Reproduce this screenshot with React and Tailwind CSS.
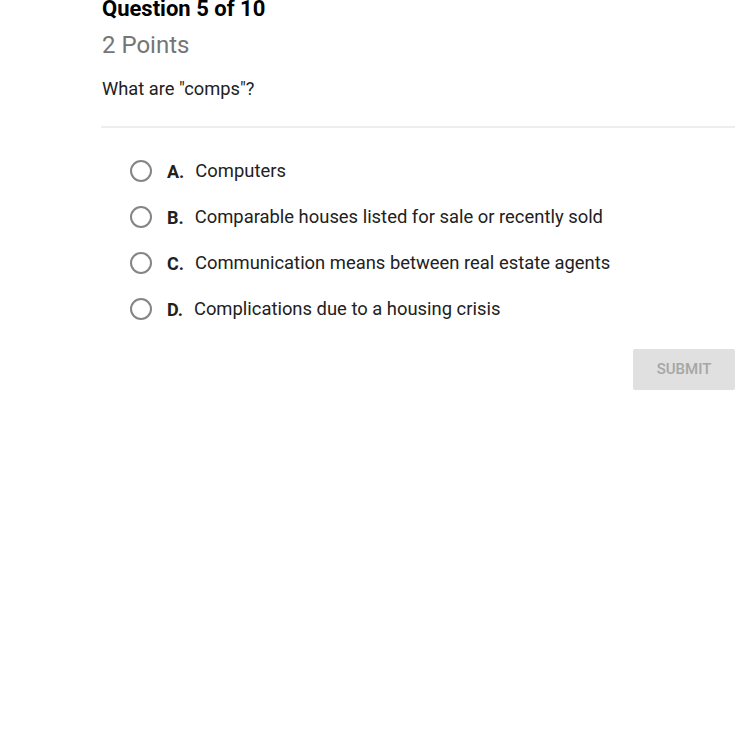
const options = [
  ['A.', 'Computers'],
  ['B.', 'Comparable houses listed for sale or recently sold'],
  ['C.', 'Communication means between real estate agents'],
  ['D.', 'Complications due to a housing crisis'],
]

export default function App() {
  return (
    <div className="h-[750px] w-[750px] overflow-hidden bg-white font-['Roboto',sans-serif] text-[#212121]">
      <div className="ml-[101px] mr-[15px]">
        <div className="-mt-[4px] pl-px text-[22px] font-bold leading-[26px] text-black">Question 5 of 10</div>
        <div className="mt-[8px] pl-px text-[24px] leading-[30px] text-[#757575]">2 Points</div>
        <div className="mt-[17px] pl-px text-[18.3px] leading-[24px]">What are "comps"?</div>
        <div className="mt-[25px] h-[2px] bg-[#eeeeee]" />
        <div className="mt-[31px] flex flex-col gap-[22px] pl-[29px]">
          {options.map(([letter, text]) => (
            <div key={letter} className="flex h-[24px] items-center">
              <span className="h-[22px] w-[22px] rounded-full border-2 border-[#858585]" />
              <span className="ml-[15px] mr-[11px] text-[18px] font-bold">{letter}</span>
              <span className="text-[18.4px]">{text}</span>
            </div>
          ))}
        </div>
        <div className="mt-[28px] flex justify-end">
          <button className="h-[41px] w-[102px] rounded-[2px] bg-[#e0e0e0] text-[15px] font-medium text-[#a6a6a6]">SUBMIT</button>
        </div>
      </div>
    </div>
  )
}
